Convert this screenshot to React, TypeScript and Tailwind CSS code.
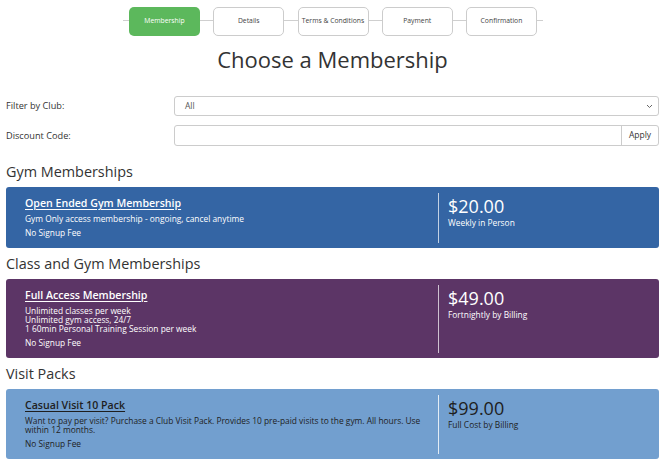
import React from "react";

const steps = ["Membership", "Details", "Terms & Conditions", "Payment", "Confirmation"];

type Plan = {
  title: string;
  lines: string[];
  price: string;
  period: string;
};

const sections: { heading: string; bg: string; text: string; divider: string; plan: Plan }[] = [
  {
    heading: "Gym Memberships",
    bg: "bg-[#3465a4]",
    text: "text-white",
    divider: "bg-white/70",
    plan: {
      title: "Open Ended Gym Membership",
      lines: ["Gym Only access membership - ongoing, cancel anytime"],
      price: "$20.00",
      period: "Weekly in Person",
    },
  },
  {
    heading: "Class and Gym Memberships",
    bg: "bg-[#5c3566]",
    text: "text-white",
    divider: "bg-white/70",
    plan: {
      title: "Full Access Membership",
      lines: [
        "Unlimited classes per week",
        "Unlimited gym access, 24/7",
        "1 60min Personal Training Session per week",
      ],
      price: "$49.00",
      period: "Fortnightly by Billing",
    },
  },
  {
    heading: "Visit Packs",
    bg: "bg-[#729fcf]",
    text: "text-[#1e1e1e]",
    divider: "bg-white/80",
    plan: {
      title: "Casual Visit 10 Pack",
      lines: [
        "Want to pay per visit? Purchase a Club Visit Pack. Provides 10 pre-paid visits to the gym. All hours. Use within 12 months.",
      ],
      price: "$99.00",
      period: "Full Cost by Billing",
    },
  },
];

function Stepper() {
  return (
    <div className="relative ml-[123px] flex w-[408px] justify-between pt-[7px]">
      <div className="absolute left-[-6px] right-[-6px] top-[20px] h-px bg-[#cfcfcf]" />
      {steps.map((s, i) => (
        <div
          key={s}
          className={
            "relative z-[1] flex h-[29px] w-[71px] shrink-0 items-center justify-center rounded-[5px] text-[6.8px] " +
            (i === 0
              ? "bg-[#5cb85c] text-white"
              : "border border-[#cccccc] bg-white text-[#444]")
          }
        >
          {s}
        </div>
      ))}
    </div>
  );
}

export default function App() {
  return (
    <div className="w-[665px] bg-white px-[6px] font-['Open_Sans',sans-serif] text-[#333]">
      <Stepper />
      <h1 className="mt-[8px] text-center text-[22px] leading-[30px] text-[#333]">Choose a Membership</h1>

      <div className="mt-[22px] flex items-center">
        <label className="w-[168px] text-[9.2px]">Filter by Club:</label>
        <div className="flex h-[20px] flex-1 items-center justify-between rounded-[3px] border border-[#ccc] pl-[10px] pr-[4px] text-[8.5px] text-[#555]">
          <span>All</span>
          <svg width="7" height="5" viewBox="0 0 7 5" className="mr-[1px]">
            <path d="M1 1l2.5 2.5L6 1" fill="none" stroke="#666" strokeWidth="1" />
          </svg>
        </div>
      </div>

      <div className="mt-[9px] flex items-center">
        <label className="w-[168px] text-[9.2px]">Discount Code:</label>
        <div className="flex h-[21px] flex-1 rounded-[3px] border border-[#ccc]">
          <div className="flex-1" />
          <button className="w-[37px] border-l border-[#ccc] text-[8.5px] text-[#333]">Apply</button>
        </div>
      </div>

      <div className="mt-[16px]">
        {sections.map((sec) => (
          <div key={sec.heading} className="mb-[6px]">
            <h2 className="text-[14.4px] leading-[20px] text-[#333]">{sec.heading}</h2>
            <div className={"mt-[5px] flex rounded-[3px] pb-[5px] pt-[6px] " + sec.bg + " " + sec.text}>
              <div className="w-[432px] pb-[5px] pl-[19px] pr-[8px] pt-[1px]">
                <div className="text-[10.6px] font-semibold leading-[18px] underline underline-offset-[2px]">
                  {sec.plan.title}
                </div>
                <div className="mt-[2px] text-[8.4px] leading-[9px]">
                  {sec.plan.lines.map((l) => (
                    <div key={l}>{l}</div>
                  ))}
                </div>
                <div className="mt-[4px] text-[8.4px] leading-[11px]">No Signup Fee</div>
              </div>
              <div className={"w-px " + sec.divider} />
              <div className="pl-[9px] pt-[1px]">
                <div className="text-[18px] leading-[24px]">{sec.plan.price}</div>
                <div className="text-[8.4px] leading-[10px]">{sec.plan.period}</div>
              </div>
            </div>
          </div>
        ))}
      </div>
    </div>
  );
}
